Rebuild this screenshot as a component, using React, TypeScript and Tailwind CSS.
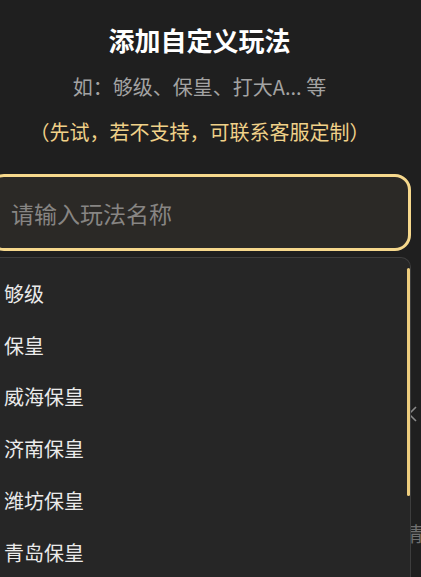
import React, { useState } from 'react';

const presets = ['够级', '保皇', '威海保皇', '济南保皇', '潍坊保皇', '青岛保皇'];

export default function App() {
  const [name, setName] = useState('');

  return (
    <div className="relative w-[421px] h-[577px] overflow-hidden bg-[#1f1f1f] font-['Noto_Sans_CJK_SC','Noto_Sans',sans-serif]">
      <div className="relative -ml-[12px] w-[423px] flex flex-col items-center">
        <h2 className="mt-[22px] text-[26px] leading-[36px] font-bold text-white">添加自定义玩法</h2>
        <p className="mt-[15px] text-[20px] leading-[28px] text-[#a3a3a3]">如：够级、保皇、打大A... 等</p>
        <p className="mt-[17px] text-[20px] leading-[28px] text-[#f0d189]">（先试，若不支持，可联系客服定制）</p>

        <input
          value={name}
          onChange={(e) => setName(e.target.value)}
          placeholder="请输入玩法名称"
          className="mt-[28px] h-[77px] w-full rounded-[16px] border-[3px] border-[#f6d88c] bg-[#2b2926] pl-[20px] text-[23px] text-white placeholder:text-[#878583] outline-none"
        />

        {/* list under the popup */}
        <div className="mt-[136px] w-full bg-[#0b0b0b]">
          <div className="flex h-[55px] items-center justify-end border-b border-[#2e2e2e] text-[#8a8a8a]">
            <svg width="20" height="20" viewBox="0 0 20 20" className="translate-x-[8px]" stroke="currentColor" strokeWidth="1.6" fill="none">
              <path d="M3 3l14 14M17 3L3 17" />
            </svg>
          </div>
          <div className="h-[70px] border-b border-[#2e2e2e]" />
          <div className="flex h-[45px] items-center justify-end border-b border-[#2e2e2e] text-[20px] text-[#6f6f6f]">
            <span className="translate-x-[12px]">请</span>
          </div>
          <div className="h-[40px]" />
        </div>

        {/* dropdown */}
        <div className="absolute left-0 top-[257px] h-[320px] w-full overflow-hidden rounded-t-[10px] border border-b-0 border-[#3d3d3d] bg-[#262626] pt-[10px]">
          <ul>
            {presets.map((p) => (
              <li key={p} className="flex h-[51.8px] items-center pl-[15px] text-[20px] text-[#ebebeb]">
                {p}
              </li>
            ))}
          </ul>
          <div className="absolute right-[0px] top-[10px] h-[228px] w-[3px] rounded-full bg-[#edcd7e]" />
        </div>
      </div>
    </div>
  );
}
